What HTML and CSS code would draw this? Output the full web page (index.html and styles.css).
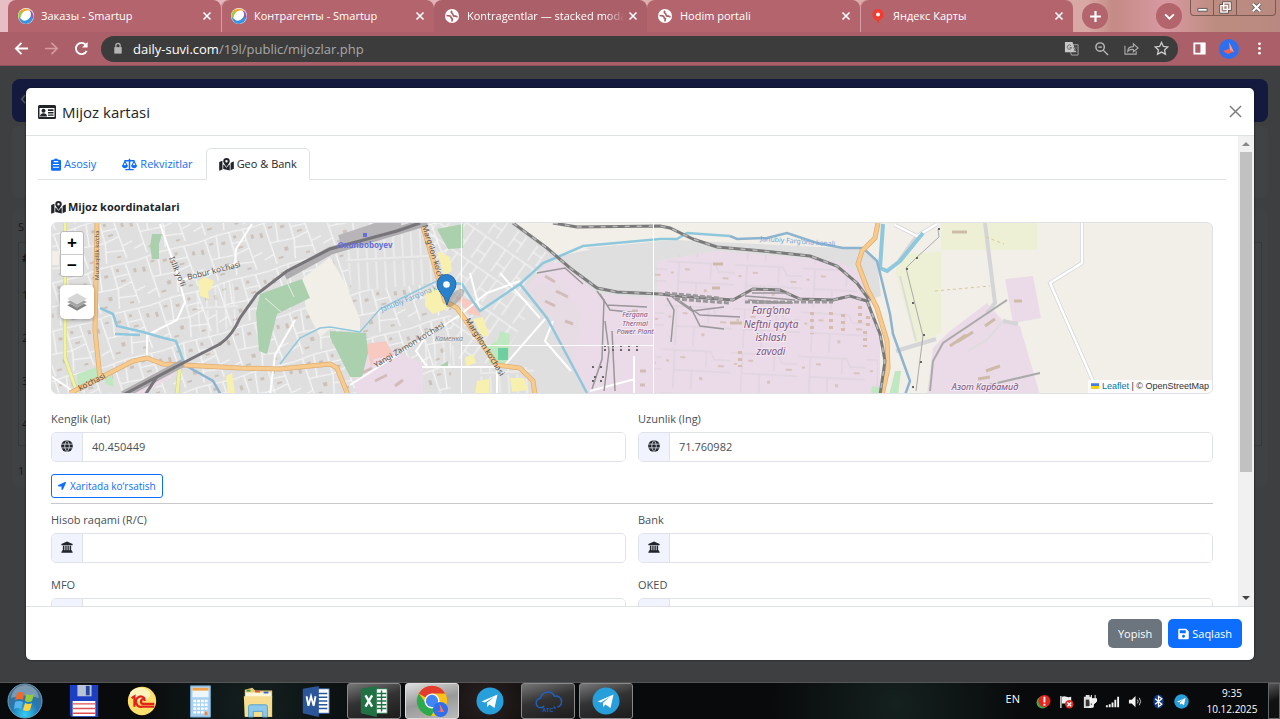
FILE: index.html
```html
<!DOCTYPE html>
<html lang="uz">
<head>
<meta charset="utf-8">
<title>Kontragentlar</title>
<link rel="stylesheet" href="styles.css">
</head>
<body>
<svg class="defs" aria-hidden="true">
  <defs>
    <symbol id="i-smartup" viewBox="0 0 16 16"><circle cx="8" cy="8" r="8" fill="#f3f3f3"/><path d="M1 11A7.500 7.500 0 0 1 4 1.500L7 3Q3 6 2 11z" fill="#9bc94a"/><path d="M3 2.500Q8-1 13 2.500L11 5Q7 2 4 5z" fill="#f5a623"/><path d="M13 2.500Q17 7 15 11L12 10Q14 5 11 3.500z" fill="#8e5bb5"/><path d="M1 9Q1 15 8 16Q14 15 15 10L12 9Q9 14 3 11z" fill="#3a93dc"/><ellipse cx="8" cy="7.500" rx="4.300" ry="5.800" transform="rotate(40 8 7.500)" fill="#fff"/></symbol>
    <symbol id="i-world" viewBox="0 0 16 16"><circle cx="8" cy="8" r="7" fill="#fff"/><path d="M2.500 7.500l3 .3q1.500.2 1.500 1.500 0 1 1.300 1.200L8 13.500M8.200 3q-1.500 1-.5 2 1 .3 1.300 1.700.5 1.800 2 1.300l2.500 1" fill="none" stroke="#ab5f68" stroke-width="1.700"/></symbol>
    <symbol id="i-x" viewBox="0 0 10 10"><path d="M1.500 1.500l7 7m0-7l-7 7" stroke="currentColor" stroke-width="1.600" fill="none"/></symbol>
    <symbol id="i-globe" viewBox="0 0 16 16"><circle cx="8" cy="8" r="7.800" fill="currentColor"/><path d="M.5 5.500h15M.5 10.500h15M8 .5C4 5 4 11 8 15.500C12 11 12 5 8 .5" fill="none" stroke="#f1f4ff" stroke-width="1"/></symbol>
    <symbol id="i-bank" viewBox="0 0 16 16"><path d="M8 .5L15.500 4v1.500H.5V4zM2.500 6.300h2v6h-2zM5.700 6.300h1.800v6H5.700zM8.600 6.300h1.800v6H8.600zM11.500 6.300h2v6h-2zM1.500 12.300h13v1.700H1.500zM.5 14h15v1.700H.5z" fill="currentColor"/></symbol>
    <symbol id="i-map" viewBox="0 0 18 16"><path d="M0 5l4-1.500V14L.8 15.500Q0 15.800 0 15zM5 8l1.500.8Q8 11 9 12q1-1 2.500-3.200L13 8v7.500L5 13.500zM14 6l3.200-1.700q.8-.3.800.5v8.500L14 15z" fill="currentColor"/><path fill-rule="evenodd" d="M9 0a4 4 0 0 1 4 4q0 2-4 7Q5 6 5 4a4 4 0 0 1 4-4zm0 2.500a1.500 1.500 0 1 0 0 3 1.500 1.500 0 0 0 0-3z" fill="currentColor"/></symbol>
    <symbol id="i-telegram" viewBox="0 0 28 28"><circle cx="14" cy="14" r="13.500" fill="#279fda"/><path d="M5.500 14.500L21.500 7.500L18.500 21l-5-3.500-2.500 2.500v-4.200l7.500-6.300-9.500 6z" fill="#fff"/></symbol>
    <pattern id="streets" width="61" height="47" patternUnits="userSpaceOnUse" patternTransform="rotate(-16)"><path d="M0 5l22-2 39 2M9 4l2 43M21 4l-3 22M34 4v25l-4 18M48 4l3 43M10 25l24 2 16-3M0 40l11-3M34 15l15 1M51 34l10-2M33 36l18 3" stroke="#f8f8f8" stroke-width="1.200" fill="none"/><path d="M12 9h4v2h-4zM24 11h4v3h-4zM2 13h3v5H2zM39 20h5v2h-5zM37 8h3v3h-3zM22 33h4v4h-4zM54 12h3v4h-3zM14 41h5v2h-5zM42 43h4v2h-4z" fill="#cdc2ba"/></pattern>
    <pattern id="streets2" width="24" height="30" patternUnits="userSpaceOnUse" patternTransform="rotate(35)"><path d="M0 4h24M5 4v26M15 4v26M5 20h10" stroke="#f7f7f7" fill="none"/></pattern>
    <pattern id="houses" width="9" height="40" patternUnits="userSpaceOnUse" patternTransform="rotate(-3)"><path d="M2 0v36M0 37h9" stroke="#f5f5f5" fill="none"/></pattern>
    <pattern id="plant" width="68" height="44" patternUnits="userSpaceOnUse" patternTransform="rotate(3)"><path d="M0 5h48l4 8h16M12 5v39M44 5v16M12 25h56M30 25v19" stroke="#dfd5df" stroke-width="1.500" fill="none"/><path d="M18 11h5v2h-5zM38 31h3v3h-3zM4 15h3v2H4zM56 18h6v2h-6z" fill="#d8c3bd"/></pattern>
  </defs>
</svg>

<header class="browser">
  <div class="tabstrip">
    <div class="btab"><svg class="fav"><use href="#i-smartup"/></svg><span>Заказы - Smartup</span><button aria-label="Close tab"><svg><use href="#i-x"/></svg></button></div>
    <div class="btab divided"><svg class="fav"><use href="#i-smartup"/></svg><span>Контрагенты - Smartup</span><button aria-label="Close tab"><svg><use href="#i-x"/></svg></button></div>
    <div class="btab current"><svg class="fav"><use href="#i-world"/></svg><span class="fade">Kontragentlar — stacked moda</span><button aria-label="Close tab"><svg><use href="#i-x"/></svg></button></div>
    <div class="btab"><svg class="fav"><use href="#i-world"/></svg><span>Hodim portali</span><button aria-label="Close tab"><svg><use href="#i-x"/></svg></button></div>
    <div class="btab divided"><svg class="fav" viewBox="0 0 16 16"><path d="M8 1a5.500 5.500 0 0 1 5.500 5.500Q13.500 10 9.500 12L8 15.500 6.500 12Q2.500 10 2.500 6.500A5.500 5.500 0 0 1 8 1z" fill="#f43b2d"/><circle cx="8" cy="6.500" r="2" fill="#fff"/></svg><span>Яндекс Карты</span><button aria-label="Close tab"><svg><use href="#i-x"/></svg></button></div>
    <button class="round" aria-label="New tab"><svg viewBox="0 0 12 12"><path d="M6 1v10M1 6h10" stroke="#fff" stroke-width="2"/></svg></button>
    <button class="round search" aria-label="Search tabs"><svg viewBox="0 0 12 12"><path d="M2 4l4 4 4-4" fill="none" stroke="#fff" stroke-width="1.800"/></svg></button>
    <div class="winctl">
      <button aria-label="Minimize"><svg viewBox="0 0 14 14"><path d="M2 8h10v3H2z" fill="#fff" stroke="#555"/></svg></button>
      <button aria-label="Restore"><svg viewBox="0 0 14 14"><path d="M5 2h7v7H5zM2 5h7v7H2z" fill="#a98275" stroke="#444" stroke-width="3"/><path d="M5 2h7v7H5zM2 5h7v7H2z" fill="#a98275" stroke="#fff" stroke-width="1.500"/></svg></button>
      <button class="wide" aria-label="Close"><svg viewBox="0 0 14 14"><path d="M3 3l8 8m0-8l-8 8" stroke="#555" stroke-width="4"/><path d="M3 3l8 8m0-8l-8 8" stroke="#fff" stroke-width="2.400"/></svg></button>
    </div>
  </div>
  <div class="toolbar">
    <button aria-label="Back"><svg viewBox="0 0 16 16"><path d="M15 8H2.500M8 2L2 8l6 6" fill="none" stroke="#fff" stroke-width="2"/></svg></button>
    <button aria-label="Forward"><svg viewBox="0 0 16 16"><path d="M1 8h12.500M8 2l6 6-6 6" fill="none" stroke="#d49aa0" stroke-width="1.800"/></svg></button>
    <button aria-label="Reload"><svg viewBox="0 0 16 16"><path d="M13.500 10.500A6 6 0 1 1 12.500 4" fill="none" stroke="#fff" stroke-width="2"/><path d="M14.500 1v6h-6z" fill="#fff"/></svg></button>
    <div class="address">
      <svg class="lock" viewBox="0 0 10 14"><path d="M1 5.500h8v7H1z" fill="#b5b5b5"/><path d="M2.700 6V3.800a2.300 2.300 0 0 1 4.600 0V6" fill="none" stroke="#b5b5b5" stroke-width="1.300"/></svg>
      <div class="url"><b>daily-suvi.com</b>/19l/public/mijozlar.php</div>
      <button aria-label="Translate"><svg viewBox="0 0 16 16"><path d="M1 1h8l4 11H1z" fill="#c8c8c8"/><path d="M9 4h6v11H8l-1-3" fill="none" stroke="#aaa"/><path d="M7.500 5A2.300 2.300 0 1 0 8 7H6M10 7h4m-2-1v1m1.500 0q-1 3-3 4m0-3q1 2 3 3" fill="none" stroke="#666"/></svg></button>
      <button aria-label="Zoom"><svg viewBox="0 0 16 16"><circle cx="6.500" cy="6.500" r="4.500" fill="none" stroke="#bbb" stroke-width="1.500"/><path d="M10 10l5 5M4.500 6.500h4" stroke="#bbb" stroke-width="1.500"/></svg></button>
      <button aria-label="Share"><svg viewBox="0 0 16 16"><path d="M1 5v9h12v-3M4 11q0-5 6-5V3l5 4.500-5 4V9Q6 8.500 4 11z" fill="none" stroke="#aaa" stroke-width="1.200"/></svg></button>
      <button aria-label="Bookmark"><svg viewBox="0 0 16 16"><path d="M8 1.500l2 4.300 4.700.5-3.500 3.200 1 4.700L8 11.800l-4.200 2.400 1-4.700L1.300 6.300l4.700-.5z" fill="none" stroke="#ccc" stroke-width="1.400"/></svg></button>
    </div>
    <button aria-label="Side panel"><svg viewBox="0 0 16 16"><path d="M2.500 2.500h11v11h-11z" fill="none" stroke="#fff" stroke-width="2"/><path d="M9 2h5v12H9z" fill="#fff"/></svg></button>
    <button class="avatar" aria-label="Profile"><svg viewBox="0 0 20 20"><circle cx="10" cy="10" r="10" fill="#2f6fed"/><path d="M10 3l5 10-4-1z" fill="#ff9a86"/><path d="M4 12l6-2 4 3-5 2z" fill="#f4614f"/></svg></button>
    <button aria-label="Menu"><svg viewBox="0 0 16 16" fill="#fff"><circle cx="8" cy="3" r="1.500"/><circle cx="8" cy="8" r="1.500"/><circle cx="8" cy="13" r="1.500"/></svg></button>
  </div>
</header>

<main class="page">
  <div class="navbar">‹</div>
  <div class="backcard"></div>
  <div class="backlist"><p>S</p><ol><li>#</li><li>1</li><li>2</li><li>3</li><li>4</li></ol><p>1</p></div>

  <section class="modal" role="dialog" aria-labelledby="title">
    <div class="modal-head">
      <svg class="idcard" viewBox="0 0 18 14"><path fill-rule="evenodd" d="M1.500 0h15Q18 0 18 1.500v11q0 1.500-1.500 1.500h-15Q0 14 0 12.500v-11Q0 0 1.500 0zM1.500 3v9h15V3z" fill="#212529"/><circle cx="5.500" cy="5.800" r="2" fill="#212529"/><path d="M2 11.500q.3-3.200 3.500-3.200t3.500 3.200zM10 4.300h5.500V6H10zM10 7h5.500v1.500H10zM10 9.500h5.500v1.300H10z" fill="#212529"/></svg>
      <h1 id="title">Mijoz kartasi</h1>
      <button class="close" aria-label="Yopish"><svg viewBox="0 0 14 14"><path d="M1 1l12 12M13 1L1 13" stroke="#7c7c7c" stroke-width="1.600"/></svg></button>
    </div>
    <div class="modal-main">
      <div class="scroll">
        <nav class="tabs">
          <a href="#asosiy"><svg viewBox="0 0 11 14"><path fill-rule="evenodd" d="M1.500 1.700H3.300a2.300 2 0 0 1 4.400 0h1.800q1.500 0 1.500 1.300v9.500q0 1.500-1.500 1.500h-8Q0 14 0 12.500V3q0-1.300 1.500-1.300zM2 6.500v1h7v-1zM2 9.500v1h7v-1zM3 3.200v1.200h5V3.200z" fill="currentColor"/></svg>Asosiy</a>
          <a href="#rekvizitlar"><svg class="wide-icon" viewBox="0 0 18 14"><path d="M8.100 0h1.800v1.600H15v1.700H9.900V12.300H14V14H4v-1.700h4.100V3.300H3V1.600h5.100z" fill="currentColor"/><path d="M3.500 3L.8 8.500h5.400zM14.500 3l-2.700 5.500h5.400z" fill="none" stroke="currentColor" stroke-width="1.300"/><path d="M0 8.200h7Q6.500 11.500 3.500 11.500T0 8.200zM11 8.200h7q-.5 3.300-3.500 3.300T11 8.200z" fill="currentColor"/></svg>Rekvizitlar</a>
          <a href="#geo" class="on"><svg class="wide-icon"><use href="#i-map"/></svg>Geo &amp; Bank</a>
        </nav>
        <div class="pane">
          <h2><svg class="wide-icon"><use href="#i-map"/></svg>Mijoz koordinatalari</h2>
          <div class="map">
            <svg class="tiles" viewBox="51 222 1162 170" preserveAspectRatio="xMidYMid slice">
              <path fill="#dfdfdf" d="M51 222h1162v172H51z"/>
              <path fill="url(#streets)" d="M51 222h400v172H51z"/>
              <path fill="#dfdfdf" d="M345 250l75-22 20 54-88 8z"/><path fill="url(#houses)" d="M345 250l75-22 20 54-88 8z"/>
              <path fill="url(#houses)" d="M192 290l40-10 10 40-40 20zM480 366h54v28h-54zM425 335l30 10 8 20h-40z"/>
              <path fill="url(#streets2)" d="M424 222h85l50 40-60 100h-40z"/>
              <!-- open ground -->
              <path fill="#f2efe9" d="M512 222h701v172H880L868 300 830 248H690l-30-8-78 10-22 5z"/>
              <path fill="#f2efe9" d="M302 278l28-22 15 26 15 36v13l-30-3-10 8-14-28zM51 250h8v14h-8z"/>
              <path fill="#e0dfdf" d="M585 247l92-8 16 1 150 7 22-1 12 15 4 34-14 4-40-40-100-8-110 6z"/>
              <!-- industry -->
              <path fill="#ebdbe8" d="M527 287l20-25h16l34 31 60 4V260l60-10 120 10 20 10 13 30 10 40v54H587l-9-14-40-76z"/>
              <path fill="#ebdbe8" d="M933 347l17-17 37-28 16 18 17 5 20 69H927zM1005 278l28-3 8 42-28 5zM355 355l30-10 38 18v31h-67zM123 394l30-22 30-5-20 14-20 13z"/>
              <path fill="url(#plant)" d="M660 255l60-5 120 10 20 35 18 45v54H655V262z"/>
              <path fill="#e0dfdf" d="M528 290l12-8 20 0 20 30-6 60z" opacity=".4"/>
              <path fill="#f7c9c0" d="M366 343l20-3 8 14-20 4-3 8zM455 295l18 5 8 15-12-2z"/>
              <path d="M362 372l10-5M375 380l12-6M395 385l8-6M545 275l10 6M556 290l12 6M545 300l10 5M565 320l8 3M640 370h6M632 310h6M640 384h5" stroke="#d2bcb8" stroke-width="3"/>
              <!-- fields -->
              <path fill="#eef0d5" d="M941 222h96v27h-96zM907 253l34-3v82l-26 11-20-73z"/>
              <path fill="#f7f0ae" d="M198 280l7-4 9 4-3 8-3 2 1 8-9-3zM425 290l14-5 10 22-16 6-8-8zM437 250l13 6 2 14-8 4zM473 318l10-2 6 18-7 2zM465 357l8-4 3 9-10 3zM477 380l12-2v15h-14zM510 377h14l4 12-16 2zM226 375l6-3 3 20h-7z"/>
              <!-- parks -->
              <path fill="#aad0ae" d="M152 233h10l-3 10v15h-7l-2-13zM260 293l42-15 8 19-33 16-10 40-8-3-3-38zM437 228l26-5v24l-15 1zM330 330l36 2 2 20-6 24h-12l-20-40zM440 365l8-5v5z"/>
              <path fill="#bfe8c0" d="M77 373l20-7 4 14-22 9zM104 372l8 2 2 12-8-3zM500 330l10 3-2 30h-18l-2-18 10-6zM895 370h6l-3 24h-9zM872 385l8 2-1 7h-8z"/>
              <path fill="#6fcfa0" d="M498 347h10v12h-10z"/>
              <path d="M286 279l8 17M265 297l16 14" stroke="#e8eee6" fill="none"/>
              <!-- streets -->
              <g fill="none" stroke="#fff" stroke-width="2"><path d="M160 223l17 48 8 30-8 18-30 15v23M252 223l-16 25-1 15-53 16M51 375l26 18M350 384l110-70 27-22 33-12M497 366v28M422 366h75M634 355v39M590 390l45-12M270 394l5-40 20-35M500 272l40 45M430 330l-14 20 12 17M480 310l-10-38M545 318l-40 46M553 320l-8 20 26 30"/></g>
              <path d="M895 224l22 11 20-12M917 235l-18 25M1082 222v40l-32 20 43 98 6 14M985 222l10 80-8 10M896 350l40-12M1003 320l15 3" fill="none" stroke="#d5d5d8" stroke-width="4"/>
              <path d="M895 224l22 11 20-12M1082 222v40l-32 20 43 98 6 14" fill="none" stroke="#fff" stroke-width="2.500"/>
              <path d="M900 275l16 65M968 350l20-12 15-18" fill="none" stroke="#ddd" stroke-width="2"/>
              <!-- water -->
              <g fill="none" stroke="#8fc8dc" stroke-width="2.500"><path d="M100 307l13 6 4 12 26 6 17 5 16 4 8 22M115 333l25 1"/><path d="M280 363l20-26 20-10 10-1 30 5 20-23 20-10 37-18" stroke-width="1.500"/><path d="M437 280l25 3 10 16 8 11 40-27 23-21 17-7 23-10 77-7h17l10-6 43 3"/><path d="M520 283l27 34 23 43 17 32"/></g>
              <path d="M883 223l-3 44 7 3 13-10 23-28" fill="none" stroke="#8fc8dc" stroke-width="4"/>
              <path d="M183 363l30 17 8 14M730 235l7 3 30-1 20-5 30 10 26 5h20l14 13 13 53 3 20 17 47-5 14" fill="none" stroke="#8db4cf" stroke-width="2.500"/>
              <!-- main roads -->
              <g fill="none"><path d="M65 222v135l13 37M180 363l-3 31" stroke="#cdd080" stroke-width="4"/><path d="M65 222v135l13 37M180 363l-3 31" stroke="#f0f2a4" stroke-width="3"/>
              <path d="M97 222l-2 108 5 47M70 392l30-15 33-17 14-3 16 6 77 4 40 1 50-5 7 4 11 27M422 222l23 78 12 7 40 57 23 3 13 13 2 14M878 222l-3 15-13 13-4 13 9 24 10 20 10 33 1 27-6 27" stroke="#dcae76" stroke-width="5"/><path d="M97 222l-2 108 5 47M70 392l30-15 33-17 14-3 16 6 77 4 40 1 50-5 7 4 11 27M422 222l23 78 12 7 40 57 23 3 13 13 2 14M878 222l-3 15-13 13-4 13 9 24 10 20 10 33 1 27-6 27" stroke="#f8ca8c" stroke-width="3.500"/></g>
              <!-- railways -->
              <path d="M285 275l45-25 67-20 30-9M123 394l60-32" fill="none" stroke="#b0adb0" stroke-width="8"/>
              <path d="M340 240l60-20" fill="none" stroke="#b8b5b8" stroke-width="12"/>
              <path d="M123 394l60-32 37-19q12-8 20-26l17-24 30-23 43-22 67-18 23-8M145 394l12-18 26-14" fill="none" stroke="#77747a" stroke-width="3"/>
              <path d="M513 222l34 25 23 20 27 20 20 4 43 2 17 2 56 4 20-11 27 1 20 9 33 1 17-4 17 5 13 33 5 27-5 34M553 222l24 4 83-1 10 2 23 11 24 8 46 4 47 5 27 10 20 17 13 18" fill="none" stroke="#7a7a7a" stroke-width="3"/>
              <path d="M513 222l34 25 23 20 27 20 20 4 43 2 17 2 56 4 20-11 27 1 20 9 33 1 17-4 17 5 13 33 5 27-5 34M553 222l24 4 83-1 10 2 23 11 24 8 46 4 47 5 27 10 20 17 13 18" fill="none" stroke="#bbb" stroke-width="1.500" stroke-dasharray="5 7"/>
              <g fill="none" stroke="#9a979a" stroke-width="1.500"><path d="M597 290l10 14 40 2M600 293l10 16 38 4M604 298l-2 60-10 30M605 320l4 30-5 40M612 330l3 60M667 297l7 12-3 32M672 296l20 14 32-4M680 300l20 14 40 2M690 305l10 20 24 3M745 295l50 4M748 299l45 3M752 292h35M755 302h35M537 272l28-5 18 16"/><path d="M665 292l55 5M675 298l55 4M745 301h88" stroke-width="3" stroke-dasharray="5 2"/></g>
              <path d="M604 345h36M604 349h34M592 366h16M594 376h14M592 380h16" stroke="#666" stroke-width="2" stroke-dasharray="2 6"/>
              <g fill="none" stroke="#aaa"><path d="M938 228l1 8-23 21-10 10 5 20 12 48-7 55"/><path d="M1040 372l-60 14M930 390l3-30 10-18 64-43" stroke-width="2"/></g>
              <path d="M938 228h2M916 257h2M906 268h2M912 302h2M923 334h2M920 361h2M912 386h2" stroke="#666" stroke-width="2"/>
              <path d="M950 345l16-11M957 341l16-10M985 325l10-7M986 370l14-5M978 378l12-2M1014 300h8M952 231h15M713 263h10M712 287h8M730 322h12" stroke="#cdbba8" stroke-width="3"/>
              <path d="M812 311v22M831 311v20M843 313v18M860 305v20M868 315v14M865 330v16M740 350v16" stroke="#d7bcae" stroke-width="4" stroke-dasharray="3 4"/>
              <path d="M935 290l55-5M986 236l18 7" stroke="#d7c89a" stroke-dasharray="3 3" fill="none"/>
              <path d="M461.500 222v172M653.500 222v172M461 344.500h193" stroke="#fff"/>
              <!-- labels -->
              <g class="place"><text x="771" y="313">Farg‘ona</text><text x="771" y="327">Neftni qayta</text><text x="771" y="340">ishlash</text><text x="771" y="354">zavodi</text></g>
              <g class="place small"><text x="635" y="316">Fergana</text><text x="635" y="325">Thermal</text><text x="635" y="333">Power Plant</text></g>
              <text class="place plantname" x="985" y="389">Азот Карбамид</text>
              <text class="station" x="365" y="247">Oxunboboyev</text><path d="M363 232h4v4h-4z" fill="#6670d8"/>
              <text class="hood" x="449" y="340">Каменка</text>
              <g class="street"><text class="minor" transform="translate(99 279) rotate(-90)">Mustaqillik ko‘cha</text><text transform="translate(188 279) rotate(-14)">Bobur ko‘chasi</text><text transform="translate(169 257) rotate(68)">Islik yo‘li</text><text transform="translate(422 225) rotate(73)">Marg‘ilon ko‘chasi</text><text transform="translate(465 319) rotate(58)">Marg‘ilon ko‘chasi</text><text transform="translate(376 367) rotate(-31)">Yangi Zamon ko‘chasi</text><text transform="translate(80 390) rotate(-27)">ko‘chasi</text></g>
              <text class="water" transform="translate(382 311) rotate(-22)">Janubiy Farg‘ona kanali</text><text class="water" transform="translate(760 240) rotate(4)">Janubiy Farg‘ona kanali</text>
              <ellipse cx="455" cy="297" rx="12" ry="5" transform="rotate(-45 455 297)" fill="#555" opacity=".3"/>
              <path d="M447 304q-2-8-7-13-3-4-3-8a9.500 9.500 0 0 1 19 0q0 4-3 8-4 5-6 13z" fill="#2a81cb" stroke="#2068a8"/><circle cx="446.500" cy="283.500" r="3.300" fill="#fff"/>
            </svg>
            <div class="mapctl"><div class="zoomctl"><button aria-label="Zoom in">+</button><button aria-label="Zoom out">−</button></div>
              <button class="layers" aria-label="Layers"><svg viewBox="0 0 20 20"><path d="M1 13l9 5 9-5-3-1.500-6 3.500-6-3.500z" fill="#858585"/><path d="M1 10l9 5 9-5-3-1.500-6 3.500-6-3.500z" fill="#a5a5a5"/><path d="M10 2l9 5-9 5-9-5z" fill="#d6d6d6"/></svg></button></div>
            <div class="credit"><svg viewBox="0 0 12 8"><path fill="#4c7be1" d="M0 0h12v4H0z"/><path fill="#ffd500" d="M0 4h12v3H0z"/><path fill="#e0bc00" d="M0 7h12v1H0z"/></svg><a href="#leaflet">Leaflet</a> | © OpenStreetMap</div>
          </div>
          <div class="grid">
            <div class="field"><label for="lat">Kenglik (lat)</label><div class="group"><span><svg><use href="#i-globe"/></svg></span><input id="lat" value="40.450449"></div></div>
            <div class="field"><label for="lng">Uzunlik (lng)</label><div class="group"><span><svg><use href="#i-globe"/></svg></span><input id="lng" value="71.760982"></div></div>
          </div>
          <button class="show"><svg viewBox="0 0 512 512"><path fill="currentColor" d="M444.520 3.520L28.740 195.420c-47.970 22.390-31.980 92.750 19.190 92.750h175.910v175.910c0 51.170 70.360 67.170 92.750 19.190l191.900-415.780c15.990-38.390-25.590-79.970-63.970-63.970z"/></svg>Xaritada ko‘rsatish</button>
          <hr>
          <div class="grid bankgrid">
            <div class="field"><label for="acc">Hisob raqami (R/C)</label><div class="group"><span><svg><use href="#i-bank"/></svg></span><input id="acc"></div></div>
            <div class="field"><label for="bank">Bank</label><div class="group"><span><svg><use href="#i-bank"/></svg></span><input id="bank"></div></div>
            <div class="field"><label for="mfo">MFO</label><div class="group"><span></span><input id="mfo"></div></div>
            <div class="field"><label for="oked">OKED</label><div class="group"><span></span><input id="oked"></div></div>
          </div>
        </div>
      </div>
      <div class="scrollbar"><i class="up"></i><div class="track"><div class="thumb"></div></div><i class="down"></i></div>
    </div>
    <div class="modal-foot">
      <button class="btn gray">Yopish</button>
      <button class="btn blue"><svg viewBox="0 0 448 512"><path fill="currentColor" fill-rule="evenodd" d="M433.941 129.941l-83.882-83.882A48 48 0 0 0 316.118 32H48C21.490 32 0 53.490 0 80v352c0 26.510 21.490 48 48 48h352c26.510 0 48-21.490 48-48V163.882a48 48 0 0 0-14.059-33.941zM224 416c-35.346 0-64-28.654-64-64 0-35.346 28.654-64 64-64s64 28.654 64 64c0 35.346-28.654 64-64 64zm96-304.520V212c0 6.627-5.373 12-12 12H76c-6.627 0-12-5.373-12-12V108c0-6.627 5.373-12 12-12h228.520c3.183 0 6.235 1.264 8.485 3.515l3.480 3.480A11.996 11.996 0 0 1 320 111.480z"/></svg>Saqlash</button>
    </div>
  </section>
</main>

<footer class="taskbar">
  <button class="start" aria-label="Start"><svg viewBox="0 0 36 36"><defs><radialGradient id="orb" cx=".5" cy=".9" r=".8"><stop offset="0" stop-color="#35d0f5"/><stop offset=".5" stop-color="#2379b5"/><stop offset="1" stop-color="#456b8a"/></radialGradient></defs><circle cx="18" cy="18" r="17" fill="url(#orb)" stroke="#6ca2bd"/><path d="M4 15q2-12 14-13 12 1 14 13-14-5-28 0z" fill="#fff" opacity=".3"/><path d="M10 10q4-2 7 0l-1 7q-3-2-8 0z" fill="#ed6b2d"/><path d="M19 11q4 2 8 0l-2 7q-3 2-7 0z" fill="#96c93d"/><path d="M8 19q4-2 8 0l-2 7q-3-2-7 0z" fill="#55b5ef"/><path d="M18 20q4 2 7 0l-2 7q-3 2-7 0z" fill="#ffd23f"/></svg></button>
  <button aria-label="Total Commander"><svg viewBox="0 0 36 36"><path d="M3 1h30v34H5l-2-2z" fill="#1c3fc4"/><path d="M11 1h15v12H11z" fill="#b9c3d6"/><path d="M20 2h4v10h-4z" fill="#26459f"/><path d="M6 18h24v16H6z" fill="#fff"/><path d="M6 21h24M6 26h24M6 31h24" stroke="#e05050" stroke-width="1.500"/></svg></button>
  <button aria-label="1C"><svg viewBox="0 0 36 36"><circle cx="18" cy="18" r="15" fill="#ffdf6b"/><ellipse cx="16" cy="11" rx="11" ry="7" fill="#fff3bd"/><path d="M7 15l3-2v11M21 16a5 5.500 0 1 0-3 8h13M21 18a2 2.500 0 1 0-2 3h12" fill="none" stroke="#e2231a" stroke-width="2.400"/></svg></button>
  <button aria-label="Calculator"><svg viewBox="0 0 36 36"><path d="M8 2h21v33H8z" fill="#a9d0ee" stroke="#6fa5cf"/><path d="M10 4h17v10H10z" fill="#eef6fb"/><path d="M10 4h17v3H10z" fill="#f1a24b"/><path d="M11 18h15M11 22h15M11 26h15M11 30h15" stroke="#fff" stroke-width="2.500" stroke-dasharray="3 1"/><path d="M23 29h3v4h-3z" fill="#f0883a"/></svg></button>
  <button aria-label="Explorer"><svg viewBox="0 0 36 36"><path d="M4 6l8-2 3 3h18v28H4z" fill="#e9cc75"/><path d="M5 9h27v6H5z" fill="#fff7da"/><path d="M3 13h30l-1 21H4z" fill="#f6dd8f"/><path d="M8 35V24q0-2 2-2h16q2 0 2 2v11h-5v-6H13v6z" fill="#8cc9ea" stroke="#58a2cf"/><path d="M6 6h4v2H6z" fill="#3d9944"/><path d="M15 7h5v2h-5z" fill="#d54"/><path d="M24 8h5v2h-5z" fill="#36c"/></svg></button>
  <button aria-label="Word"><svg viewBox="0 0 36 36"><path d="M19 5h13v26H19z" fill="#fff" stroke="#2b579a"/><path d="M20 10h10M20 14h10M20 18h10M20 22h10M20 26h10" stroke="#2b579a" stroke-width="1.500"/><path d="M4 5l17-3v33L4 31z" fill="#2b579a"/><path d="M8 13l2 10 2.700-10L15.500 23l2-10" fill="none" stroke="#fff" stroke-width="2"/></svg></button>
  <button class="open" aria-label="Excel"><svg viewBox="0 0 36 36"><path d="M19 5h13v26H19z" fill="#fff" stroke="#207245"/><path d="M21 10h10M21 14h10M21 18h10M21 22h10M21 26h10M26 7v22" stroke="#207245" stroke-width="1.500"/><path d="M4 5l17-3v33L4 31z" fill="#207245"/><path d="M9 12l7 12M16 12L9 24" stroke="#fff" stroke-width="2.500"/></svg></button>
  <button class="open active" aria-label="Chrome"><svg viewBox="0 0 36 36"><circle cx="18" cy="18" r="16" fill="#fbc116"/><path d="M18 18L4 10A16 16 0 0 1 32 10H18z" fill="#e33b2e"/><path d="M4 10A16 16 0 0 0 17 34l8-13-7-3-6 3z" fill="#2da94f"/><circle cx="18" cy="18" r="8" fill="#fff"/><circle cx="18" cy="18" r="6.500" fill="#4285f4"/><circle cx="27" cy="27" r="8" fill="#2f6fed"/><path d="M26 21l5 9-6-1-4 1 6-2z" fill="#ff7161"/></svg></button>
  <button aria-label="Telegram"><svg class="tg"><use href="#i-telegram"/></svg></button>
  <button class="open" aria-label="ATC"><svg viewBox="0 0 36 36"><path d="M13 25h-2a5 5 0 0 1-1-10 8 8 0 0 1 15-2 5.500 5.500 0 0 1 3 11.500M12 25l2-2M24 24l2 2" fill="none" stroke="#235fc0" stroke-width="1.600"/><text x="12" y="30" class="atc">ATC</text></svg></button>
  <button class="open" aria-label="Telegram"><svg class="tg"><use href="#i-telegram"/></svg></button>
  <div class="tray">
    <span class="lang">EN</span>
    <svg viewBox="0 0 16 16"><circle cx="7" cy="9" r="6.500" fill="#3ba648"/><circle cx="9" cy="7.500" r="6.500" fill="#e5241d"/><path d="M9 3v6M9 10.500v2" stroke="#fff" stroke-width="2"/></svg>
    <svg viewBox="0 0 16 16"><path d="M2 2v13" stroke="#ddd" stroke-width="1.500"/><path d="M3 3q3-1 5 0t5 0v7H3z" fill="#eee"/><circle cx="11" cy="11" r="4.500" fill="#df2e26"/><path d="M9 9l4 4m0-4l-4 4" stroke="#fff" stroke-width="1.500"/></svg>
    <svg viewBox="0 0 16 16"><path d="M2 3h8v12H2zM4 1h4v2H4z" fill="#ddd"/><path d="M4 6h4v7H4z" fill="#333"/><path d="M10 1v4m4-4v4M8.500 5h7v3q-3 3-3.500 3T8.500 8zM12 10v4H7" stroke="#fff" fill="#eee"/></svg>
    <svg viewBox="0 0 16 16"><path d="M1 12h2v2H1zM4 11h2v3H4zM7 9h2v5H7zM10 6h2v8h-2zM13 3h2v11h-2z" fill="#f4f4f4"/></svg>
    <svg viewBox="0 0 16 16"><path d="M1 6h3l4-4v12l-4-4H1z" fill="#f4f4f4"/><path d="M10 6q1.500 2 0 4M12 4q3 4 0 8" fill="none" stroke="#ccc"/></svg>
    <svg viewBox="0 0 16 16"><ellipse cx="8" cy="8" rx="5.500" ry="7.500" fill="#123b86"/><path d="M4.500 5l7 6L8 13.500v-11L11.500 5l-7 6" fill="none" stroke="#fff" stroke-width="1.300"/></svg>
    <svg><use href="#i-telegram"/></svg>
    <div class="clock"><time>9:35</time><time>10.12.2025</time></div>
    <button class="desktop" aria-label="Show desktop"></button>
  </div>
</footer>
</body>
</html>
```
FILE: styles.css
```css
* { box-sizing: border-box; }
body { margin: 0; height: 100vh; display: flex; flex-direction: column; overflow: hidden; background: #3e3f41; font: 11px/18px "Open Sans", "Noto Sans", sans-serif; color: #212529; }
button { border: 0; margin: 0; padding: 0; background: none; font: inherit; color: inherit; display: flex; align-items: center; justify-content: center; }
.defs { position: absolute; width: 0; height: 0; }

.tabstrip { height: 32px; padding-left: 8px; display: flex; background: linear-gradient(90deg, #e6bec4 0, #d8a8a4 85%, #c48a85 87%, #d899a2 91%, #bd8c80 95%, #b98981); }
.btab { flex: 0 1 213px; min-width: 0; display: flex; align-items: center; padding: 0 6px 0 10px; background: #b3646c; color: #fff; border-radius: 8px 8px 0 0; }
.btab.current { background: #ab5f68; }
.btab.divided { box-shadow: inset 1px 0 #d79ea3; }
.fav { width: 16px; height: 16px; flex: none; margin-right: 7px; }
.btab span { flex: 1; min-width: 0; overflow: hidden; white-space: nowrap; }
.btab .fade { mask-image: linear-gradient(90deg, #000 88%, transparent); }
.btab button { width: 16px; height: 16px; flex: none; }
.btab button svg { width: 10px; height: 10px; }
.round { width: 26px; height: 26px; margin: 3px 0 0 9px; border-radius: 50%; background: #b3646c; flex: none; }
.round svg { width: 13px; height: 13px; }
.search { margin-left: auto; }
.winctl { display: flex; height: 16px; margin: 0 4px 0 8px; border: 1px solid #7b5a52; border-top: 0; border-radius: 0 0 4px 4px; }
.winctl button { width: 23px; border-right: 1px solid #7b5a52; }
.winctl .wide { width: 38px; border: 0; }
.winctl svg { width: 13px; height: 13px; }

.toolbar { height: 34px; padding: 0 6px; display: flex; align-items: center; background: #ab5f68; border-bottom: 1px solid #8c5057; }
.toolbar button { width: 30px; height: 26px; flex: none; }
.toolbar button svg { width: 15px; height: 15px; }
.toolbar .avatar svg { width: 20px; height: 20px; }
.address { flex: 1; height: 26px; margin: 0 6px 0 5px; padding: 0 2px 0 12px; display: flex; align-items: center; border-radius: 13px; background: #3c3c3c; color: #a8a8a8; font-size: 13px; }
.address b { color: #fff; font-weight: 400; }
.lock { width: 10px; height: 13px; margin-right: 10px; }
.url { flex: 1; }

.page { flex: 1; min-height: 0; position: relative; padding: 13px 12px; background: #3e3f41; }
.navbar { height: 43px; border-radius: 8px; background: #141a3d; color: #55585c; padding: 8px; font-size: 22px; }
.backcard { height: 72px; margin-top: 4px; border-radius: 6px; background: #414244; }
.backlist { height: 276px; margin-top: 12px; padding: 8px 6px; border-radius: 6px; background: #404143; color: #151618; }
.backlist p { margin: 0; }
.backlist ol { list-style: none; margin: 6px 0 16px; padding: 0; border: 1px solid #37383c; line-height: 43px; }
.backlist li { height: 43px; padding-left: 3px; }
.backlist li:first-child { height: 30px; line-height: 30px; font-weight: 700; }

.modal { position: absolute; inset: 22px 26px 22px 26px; display: flex; flex-direction: column; overflow: hidden; border-radius: 5px; background: #fff; box-shadow: 0 0 2px #111; }
.modal-head { height: 48px; flex: none; padding: 0 12px; display: flex; align-items: center; border-bottom: 1px solid #dee2e6; }
.idcard { width: 18px; height: 14px; margin-right: 6px; }
h1 { margin: 0; font-size: 15px; font-weight: 400; flex: 1; }
.close svg { width: 13px; height: 13px; }
.modal-main { flex: 1; min-height: 0; display: flex; }
.scroll { flex: 1; min-width: 0; overflow: hidden; padding: 12px; }
.tabs { display: flex; height: 32px; border-bottom: 1px solid #dee2e6; }
.tabs a { height: 32px; padding: 0 12px; display: flex; align-items: center; gap: 3px; color: #0d6efd; text-decoration: none; border: 1px solid transparent; border-radius: 5px 5px 0 0; }
.tabs svg { width: 10px; height: 13px; }
.tabs .wide-icon, h2 .wide-icon { width: 15px; height: 13px; }
.tabs .on { color: #212529; background: #fff; border-color: #dee2e6 #dee2e6 #fff; }
.pane { padding: 18px 13px; }
h2 { margin: 0 0 6px; font-size: 11px; line-height: 18px; font-weight: 700; display: flex; align-items: center; gap: 2px; }
.map { height: 172px; position: relative; overflow: hidden; border: 1px solid #dee2e6; border-radius: 6px; background: #f2efe9; }
.tiles { display: block; width: 100%; height: 100%; font-family: "Noto Sans", sans-serif; }
.place { font-size: 10px; font-style: italic; text-anchor: middle; fill: #7d5480; stroke: #f3e9f1; stroke-width: 2px; paint-order: stroke; }
.place.small { font-size: 7px; }
.place.plantname { font-size: 9px; }
.station { font-size: 8px; font-weight: 700; text-anchor: middle; fill: #6670d8; }
.hood { font-size: 7px; font-style: italic; text-anchor: middle; fill: #888; }
.street { font-size: 8px; fill: #57514b; }
.street .minor { font-size: 6px; }
.water { font-size: 7px; fill: #6ea6d8; }
.mapctl { position: absolute; left: 8px; top: 8px; display: flex; flex-direction: column; gap: 8px; }
.zoomctl { width: 24px; border: 1px solid #bbb; border-radius: 3px; background: #fff; }
.zoomctl button { width: 22px; height: 22px; font: 700 17px/22px "Liberation Sans", sans-serif; color: #000; }
.zoomctl button + button { border-top: 1px solid #ccc; }
.layers { width: 34px; height: 34px; border-radius: 5px; background: #fff; box-shadow: 0 1px 4px #0005; }
.layers svg { width: 22px; height: 22px; }
.credit { position: absolute; right: 0; bottom: 0; padding: 0 3px; background: #fffc; font: 9px/13px "Liberation Sans", sans-serif; color: #333; }
.credit svg { width: 8px; height: 6px; margin-right: 3px; }
.credit a { color: #0078a8; text-decoration: none; }
.grid { display: grid; grid-template-columns: 1fr 1fr; gap: 13px 12px; margin-top: 16px; }
.field { min-width: 0; color: #495057; }
.field label { display: block; margin-bottom: 4px; }
.group { display: flex; height: 30px; border: 1px solid #dfe2e8; border-radius: 5px; overflow: hidden; }
.group span { width: 31px; flex: none; display: flex; align-items: center; justify-content: center; padding-bottom: 2px; background: #f1f4ff; border-right: 1px solid #dfe2e8; color: #212529; }
.group svg { width: 12px; height: 12px; }
.group input { flex: 1; min-width: 0; border: 0; outline: 0; padding: 0 9px; font: inherit; color: #495057; background: #fff; }
.show { height: 24px; margin-top: 12px; padding: 0 6px; gap: 4px; border: 1px solid #0d6efd; border-radius: 3px; color: #0d6efd; font-size: 10px; }
.show svg { width: 8px; height: 8px; }
hr { margin: 5px 0 0; border: 0; border-top: 1px solid #c8c9ca; }
.bankgrid { margin-top: 7px; }
.scrollbar { width: 16px; flex: none; display: flex; flex-direction: column; background: #f1f1f1; }
.scrollbar i { height: 16px; display: grid; place-items: center; }
.scrollbar i::after { content: ""; border: 4px solid transparent; }
.scrollbar .up::after { border-bottom-color: #888; border-top: 0; }
.scrollbar .down::after { border-top-color: #444; border-bottom: 0; }
.track { flex: 1; padding: 0 2px; }
.thumb { height: 73%; background: #c1c1c1; }
.modal-foot { height: 54px; flex: none; padding: 0 12px; display: flex; align-items: center; justify-content: flex-end; gap: 6px; border-top: 1px solid #dee2e6; }
.btn { height: 29px; padding: 0 10px; gap: 3px; border-radius: 5px; color: #fff; font-weight: 500; }
.btn svg { width: 11px; height: 12px; }
.gray { background: #6c757d; }
.blue { background: #0d6efd; }

.taskbar { height: 37px; flex: none; display: flex; gap: 4px; border-top: 1px solid #555; background: radial-gradient(circle at 20% 50%, #13201f, transparent 12%), radial-gradient(circle at 38% 50%, #2a2020, transparent 8%), radial-gradient(circle at 70% 60%, #14211f, transparent 14%), #090a0b; }
.taskbar > button { width: 54px; height: 36px; }
.taskbar > .start { width: 50px; margin-right: 3px; }
.taskbar > button svg { width: 34px; height: 34px; }
.taskbar .start svg { width: 36px; height: 36px; }
.taskbar > button .tg { width: 28px; height: 28px; }
.taskbar .open { border: 1px solid #8a8a8a; border-radius: 3px; background: linear-gradient(165deg, #777, #333 45%, #1c1c1c); }
.taskbar .active { background: linear-gradient(165deg, #ddd, #999 50%, #bbb); border-color: #ddd; }
.atc { font: 700 6px "Liberation Sans", sans-serif; fill: #235fc0; }
.tray { margin-left: auto; display: flex; align-items: center; gap: 8px; color: #fff; }
.tray svg { width: 15px; height: 15px; }
.lang { margin-right: 8px; padding-bottom: 4px; }
.clock { width: 64px; margin-left: 3px; display: flex; flex-direction: column; align-items: center; line-height: 16px; font-size: 10px; }
.desktop { width: 12px; height: 36px; margin-left: -4px; border: 1px solid #666; background: linear-gradient(160deg, #555, #111 50%); }
```
